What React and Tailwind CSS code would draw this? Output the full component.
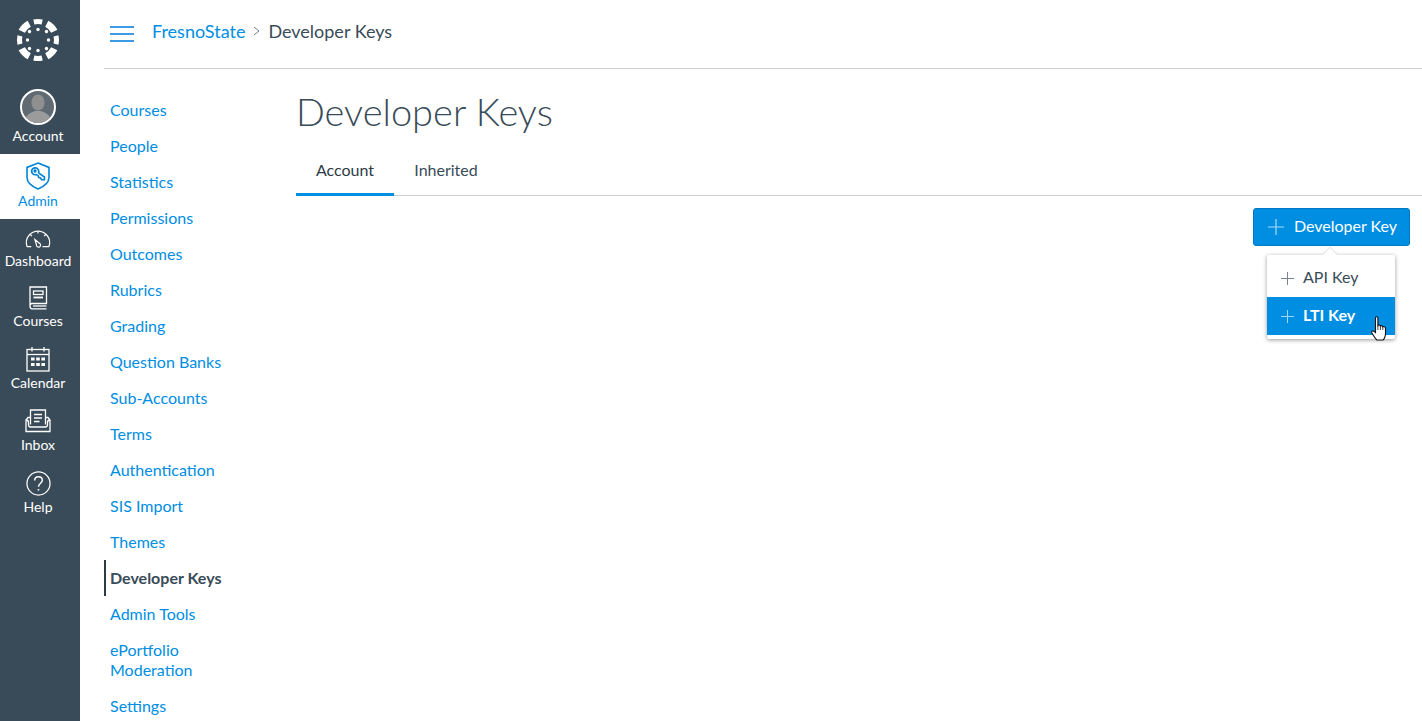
const NAV_LINKS = [
  "Courses",
  "People",
  "Statistics",
  "Permissions",
  "Outcomes",
  "Rubrics",
  "Grading",
  "Question Banks",
  "Sub-Accounts",
  "Terms",
  "Authentication",
  "SIS Import",
  "Themes",
  "Developer Keys",
  "Admin Tools",
  "ePortfolio Moderation",
  "Settings",
];

function CanvasLogo() {
  return (
    <svg width="44" height="44" viewBox="0 0 44 44" fill="white">
      {[0, 90, 180, 270].map((a) => (
        <path key={a} transform={`rotate(${a} 22 22)`} d="M17.3 1.5 A21 21 0 0 1 26.7 1.5 L25.6 6.4 A16 16 0 0 0 18.4 6.4 Z" />
      ))}
      {[45, 135, 225, 315].map((a) => (
        <path
          key={a}
          transform={`rotate(${a} 22 22)`}
          d="M15.6 1 A22 22 0 0 1 28.4 1 L26.2 7.6 A15 15 0 0 0 17.8 7.6 Z"
        />
      ))}
      {[0, 45, 90, 135, 180, 225, 270, 315].map((a) => (
        <circle key={a} transform={`rotate(${a} 22 22)`} cx="22" cy={a % 90 === 0 ? 11.5 : 10} r="1.7" />
      ))}
    </svg>
  );
}

function Avatar() {
  return (
    <div className="w-[36px] h-[36px] rounded-full border-2 border-white overflow-hidden bg-[#5f6a72] flex items-end justify-center">
      <svg width="32" height="32" viewBox="0 0 32 32">
        <ellipse cx="16" cy="11.5" rx="6.6" ry="8" fill="#8f8f8f" />
        <path d="M2 32 C3 24 8 22 13 20 L19 20 C24 22 29 24 30 32 Z" fill="#9b9b9b" />
      </svg>
    </div>
  );
}

function AdminIcon() {
  return (
    <svg width="24" height="28" viewBox="0 0 24 28" fill="none" stroke="#0084d6" strokeWidth="1.6">
      <path d="M12 1 L23 5.4 V15.5 C23 20.6 17.6 24.6 12 27 C6.4 24.6 1 20.6 1 15.5 V5.4 Z" />
      <path d="M6.6 6.8 C8.2 5.4 10.8 5.6 12 7.2 C13 8.4 13 9.8 12.6 11 L18.4 15 L18.4 17.8 L15.6 17.8 L14.6 16 L12.8 15.6 L12.2 13.8 L10.2 12.6 C8.8 12.9 7.4 12.5 6.5 11.4 C5.4 10 5.4 8 6.6 6.8 Z" />
      <circle cx="9" cy="9" r="0.9" />
    </svg>
  );
}

function DashboardIcon() {
  return (
    <svg width="26" height="18" viewBox="0 0 28 20" fill="none" stroke="white" strokeWidth="1.3">
      <path d="M6.5 18.5 H2 C1.2 16.6 1 15.4 1 14 C1 7 7 1.2 14 1.2 C21 1.2 27 7 27 14 C27 15.4 26.8 16.6 26 18.5 H19" />
      <path d="M10.5 10.5 L16.5 15.5 C17.4 17 16.6 18.8 15 19 C13.4 19.2 12.3 18 12.3 16.6 Z" />
      <path d="M14 1.5 V4 M5.5 5 L7.2 6.8 M22.5 5 L20.8 6.8" />
    </svg>
  );
}

function CoursesIcon() {
  return (
    <svg width="20" height="24" viewBox="0 0 20 24" fill="none" stroke="white" strokeWidth="1.3">
      <path d="M2 20 V1 H18.5 V17.5 H4 C2.8 17.5 2 18.6 2 20 C2 21.4 2.8 22.8 4 22.8 H18.5" />
      <path d="M18.5 20 H5" />
      <rect x="5.5" y="5" width="9.5" height="3.5" />
      <path d="M5.5 11.5 H15" strokeWidth="1.8" />
    </svg>
  );
}

function CalendarIcon() {
  return (
    <svg width="24" height="26" viewBox="0 0 24 26" fill="none" stroke="white" strokeWidth="1.3">
      <rect x="1" y="3.5" width="22" height="21.5" />
      <path d="M1 8.5 H23" />
      <path d="M6 1 V5.5 M18 1 V5.5" />
      <g fill="white" stroke="none">
        <rect x="5" y="11.5" width="3.6" height="3" />
        <rect x="10.2" y="11.5" width="3.6" height="3" />
        <rect x="15.4" y="11.5" width="3.6" height="3" />
        <rect x="5" y="17" width="3.6" height="3" />
        <rect x="10.2" y="17" width="3.6" height="3" />
        <rect x="15.4" y="17" width="3.6" height="3" />
      </g>
    </svg>
  );
}

function InboxIcon() {
  return (
    <svg width="26" height="24" viewBox="0 0 26 24" fill="none" stroke="white" strokeWidth="1.3">
      <path d="M5.5 15.5 V1 H20.5 V15.5" />
      <path d="M9 5.5 H17 M9 9 H17 M9 12.5 H14.5" />
      <path d="M5.5 8.5 H3 L1 11 V22.5 H25 V11 L23 8.5 H20.5" />
      <path d="M1 11 C3 11 3.5 12 3.5 13.5 V15.5 C3.5 17 4 18 5.5 18 H20.5 C22 18 22.5 17 22.5 15.5 V13.5 C22.5 12 23 11 25 11" />
    </svg>
  );
}

function HelpIcon() {
  return (
    <svg width="25" height="25" viewBox="0 0 26 26" fill="none" stroke="white" strokeWidth="1.3">
      <circle cx="13" cy="13" r="12" />
      <path d="M9 10 C9 7.6 10.8 6 13 6 C15.3 6 17 7.6 17 9.7 C17 12.6 13 13 13 16.5" strokeWidth="1.5" />
      <circle cx="13" cy="19.6" r="1" fill="white" stroke="none" />
    </svg>
  );
}

function Plus({ size = 16, color = "white", width = 1.2 }) {
  return (
    <svg width={size} height={size} viewBox="0 0 16 16" fill="none" stroke={color} strokeWidth={width}>
      <path d="M8 0 V16 M0 8 H16" />
    </svg>
  );
}

function HandCursor() {
  return (
    <svg width="18" height="25" viewBox="0 0 17 25">
      <path
        d="M5 1.8 C5 0.4 7.4 0.4 7.4 1.8 V9.4 C8 8.6 9.6 8.8 9.9 10 C10.6 9.3 12 9.6 12.3 10.8 C13.2 10.2 15 10.6 15 12.4 V17.5 C15 20.5 13.4 23.6 12.5 24 H6.4 C5.2 23 3.4 20.3 1.4 17 C0.6 15.6 1.8 14.2 3.4 15.2 L5 16.6 Z"
        fill="white"
        stroke="#111"
        strokeWidth="1.1"
      />
      <path d="M7.4 9.4 V14 M9.9 10 V14 M12.3 10.8 V14" stroke="#111" strokeWidth="0.8" fill="none" />
    </svg>
  );
}

function SideItem({ icon, label, height, iconBox, active }) {
  return (
    <div
      className={`flex flex-col items-center shrink-0 pr-[4px] ${height} ${active ? "bg-white text-[#008ee2]" : "text-white"}`}
    >
      <div className={`flex items-center justify-center ${iconBox}`}>{icon}</div>
      <span className="text-[14px] leading-[20px]">{label}</span>
    </div>
  );
}

export default function App() {
  return (
    <div className="flex h-screen overflow-hidden bg-white font-['Lato','Open_Sans',sans-serif] text-[#2d3b45]">
      <aside className="w-[80px] shrink-0 bg-[#394b58] flex flex-col">
        <div className="h-[80px] shrink-0 flex items-center justify-center pr-[4px]">
          <CanvasLogo />
        </div>
        <SideItem icon={<Avatar />} label="Account" height="h-[74px]" iconBox="h-[46px] pt-[8px]" />
        <SideItem icon={<AdminIcon />} label="Admin" height="h-[65px]" iconBox="h-[37px] pt-[7px]" active />
        <SideItem icon={<DashboardIcon />} label="Dashboard" height="h-[60px]" iconBox="h-[32px] pt-[8px]" />
        <SideItem icon={<CoursesIcon />} label="Courses" height="h-[61px]" iconBox="h-[32px] pt-[6px]" />
        <SideItem icon={<CalendarIcon />} label="Calendar" height="h-[62px]" iconBox="h-[33px] pt-[5px]" />
        <SideItem icon={<InboxIcon />} label="Inbox" height="h-[62px]" iconBox="h-[33px] pt-[5px]" />
        <SideItem icon={<HelpIcon />} label="Help" height="h-[62px]" iconBox="h-[33px] pt-[5px]" />
      </aside>

      <div className="flex-1 min-w-0 pl-[24px] flex flex-col">
        <header className="h-[69px] shrink-0 border-b border-[#c7cdd1] flex items-center pb-[6px]">
          <div className="w-[24px] ml-[6px] mt-[6px] flex flex-col gap-[5px]">
            <span className="block h-[2px] bg-[#3d9be6]" />
            <span className="block h-[2px] bg-[#3d9be6]" />
            <span className="block h-[2px] bg-[#3d9be6]" />
          </div>
          <span className="ml-[18px] text-[18px] text-[#008ee2]">FresnoState</span>
          <svg className="mx-[8px]" width="7" height="10" viewBox="0 0 7 10" fill="none" stroke="#73818c" strokeWidth="1">
            <path d="M1 1 L6 5 L1 9" />
          </svg>
          <span className="text-[18px] text-[#394b58]">Developer Keys</span>
        </header>

        <div className="flex flex-1 min-h-0">
          <nav className="w-[192px] shrink-0 pt-[23px]">
            {NAV_LINKS.map((link) => {
              const current = link === "Developer Keys";
              return (
                <div
                  key={link}
                  className={`py-[8px] pr-[45px] text-[16px] leading-[20px] ${
                    current
                      ? "border-l-2 border-[#2d3b45] pl-[4px] font-bold text-[#394b58]"
                      : "pl-[6px] text-[#008ee2]"
                  }`}
                >
                  {link}
                </div>
              );
            })}
          </nav>

          <main className="flex-1 min-w-0 relative">
            <h1 className="mt-[18px] h-[48px] text-[38px] leading-[48px] font-light text-[#394b58]">
              Developer Keys
            </h1>
            <div className="mt-[13px] h-[48px] flex border-b border-[#c7cdd1]">
              <div className="w-[98px] h-[48px] flex items-center justify-center border-b-[3px] border-[#008ee2] text-[16px] pb-[2px]">
                Account
              </div>
              <div className="w-[104px] flex items-center justify-center text-[16px] text-[#394b58] pb-[4px]">
                Inherited
              </div>
            </div>
            <div className="flex justify-end pt-[12px] pr-[12px]">
              <button className="h-[38px] w-[157px] flex items-center justify-center gap-[10px] rounded-[3px] bg-[#008ee2] border border-[#0077c2] text-white text-[16px] pl-[2px]">
                <Plus color="#a6dafa" />
                <span className="pb-[2px]">Developer Key</span>
              </button>
            </div>

            {/* dropdown from the + Developer Key button */}
            <div className="absolute top-[186px] right-[27px] w-[128px] bg-white pb-[4px] pt-[4px] rounded-[2px] shadow-[0_1px_4px_rgba(0,0,0,0.4)]">
              <div className="absolute -top-[5px] left-[58px] w-[10px] h-[10px] rotate-45 bg-white shadow-[-1px_-1px_1px_rgba(0,0,0,0.1)]" />
              <div className="relative h-[38px] flex items-center gap-[9px] pl-[14px] text-[16px] text-[#394b58]">
                <Plus size={13} color="#73818c" />
                <span className="pb-[2px]">API Key</span>
              </div>
              <div className="relative h-[38px] flex items-center gap-[9px] pl-[14px] bg-[#008ee2] text-white text-[16px] font-bold">
                <Plus size={13} color="#a6dafa" />
                <span className="pb-[2px]">LTI Key</span>
              </div>
              <div className="absolute left-[103px] top-[61px]">
                <HandCursor />
              </div>
            </div>
          </main>
        </div>
      </div>
    </div>
  );
}
